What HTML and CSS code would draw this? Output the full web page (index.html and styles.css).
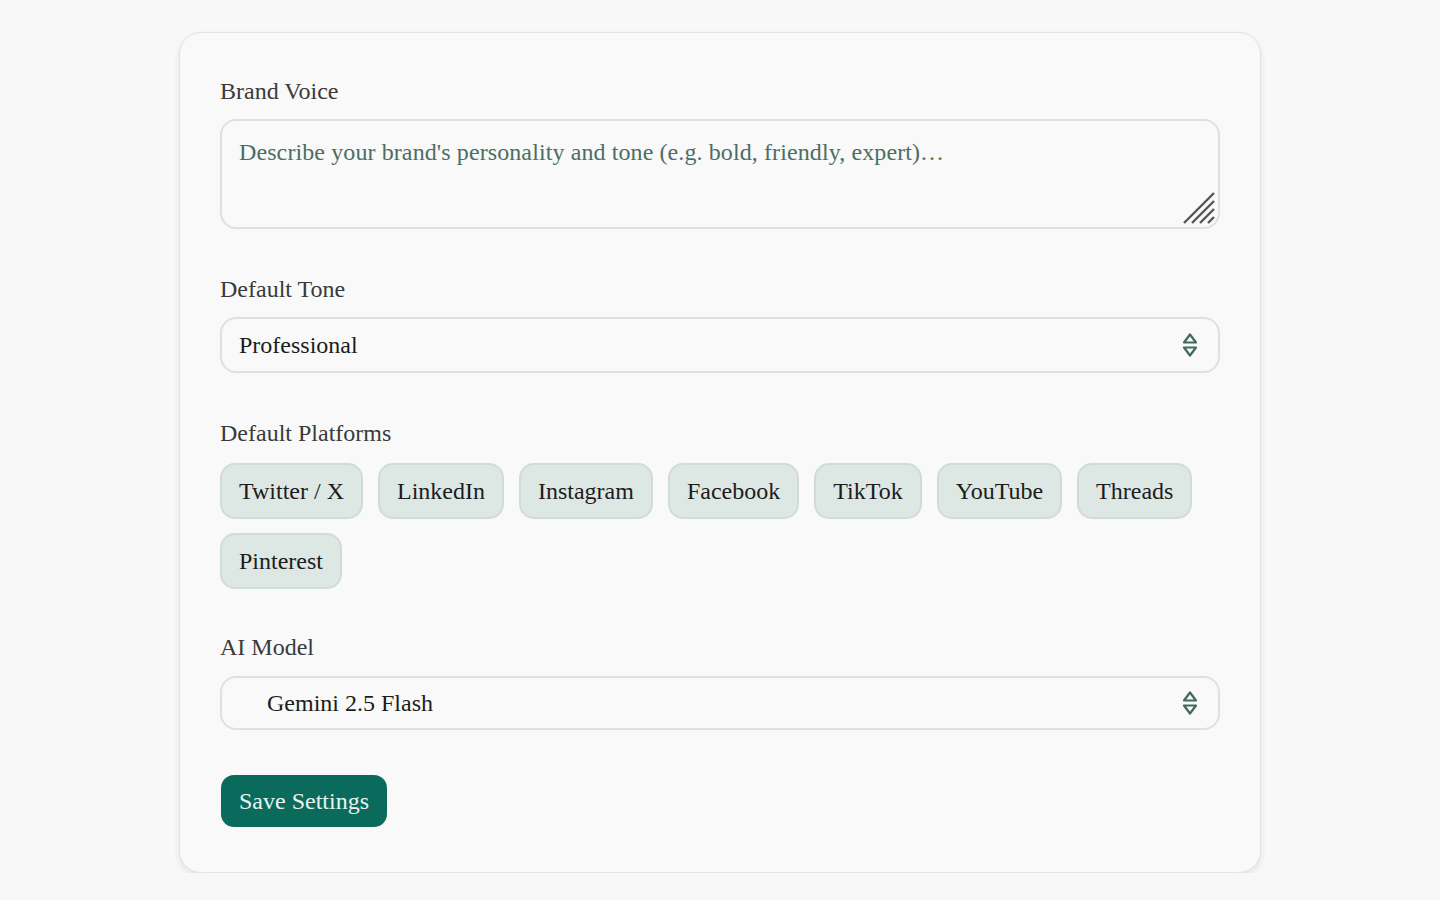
FILE: index.html
```
<!DOCTYPE html>
<html lang="en">
<head>
    <meta charset="UTF-8">
    <meta name="viewport" content="width=device-width, initial-scale=1.0">
    <title>Settings</title>
    <link rel="stylesheet" href="styles.css">
</head>
<body>

<div class="card">
    <div class="field">
        <label for="voice">Brand Voice</label>
        <div class="area-wrap">
            <textarea id="voice" placeholder="Describe your brand's personality and tone (e.g. bold, friendly, expert)…"></textarea>
            <svg class="grip" width="34" height="34" viewBox="0 0 34 34">
                <path d="M2 32 L32 2 M10 32 L32 10 M18 32 L32 18 M26 32 L32 26" stroke="#555" stroke-width="2.4" fill="none"/>
            </svg>
        </div>
    </div>

    <div class="field">
        <label for="tone">Default Tone</label>
        <div class="select-wrap">
            <select id="tone">
                <option>Professional</option>
                <option>Casual</option>
                <option>Friendly</option>
                <option>Witty</option>
            </select>
            <svg class="arrows" width="16" height="26" viewBox="0 0 16 26">
                <path d="M8 2.5 L14 10.5 H2 Z M2 15.5 H14 L8 23.5 Z" stroke="#3f6a5d" stroke-width="2.2" stroke-linejoin="round" fill="none"/>
            </svg>
        </div>
    </div>

    <div class="field">
        <label>Default Platforms</label>
        <div class="chips">
            <button type="button" class="chip">Twitter / X</button>
            <button type="button" class="chip">LinkedIn</button>
            <button type="button" class="chip">Instagram</button>
            <button type="button" class="chip">Facebook</button>
            <button type="button" class="chip">TikTok</button>
            <button type="button" class="chip">YouTube</button>
            <button type="button" class="chip">Threads</button>
            <button type="button" class="chip">Pinterest</button>
        </div>
    </div>

    <div class="field">
        <label for="model">AI Model</label>
        <div class="select-wrap model-wrap">
            <select id="model" class="model">
                <option>Gemini 2.5 Flash</option>
                <option>Gemini 2.5 Pro</option>
            </select>
            <svg class="arrows" width="16" height="26" viewBox="0 0 16 26">
                <path d="M8 2.5 L14 10.5 H2 Z M2 15.5 H14 L8 23.5 Z" stroke="#3f6a5d" stroke-width="2.2" stroke-linejoin="round" fill="none"/>
            </svg>
        </div>
    </div>

    <div>
        <button type="button" class="save-btn">Save Settings</button>
    </div>
</div>

</body>
</html>
```

FILE: styles.css
```
* {
    margin: 0;
    padding: 0;
    box-sizing: border-box;
}

body {
    font-family: 'Liberation Serif', 'Times New Roman', serif;
    background-color: #f7f8f7;
    color: #1c1c1c;
    padding-top: 32px;
}

.card {
    width: 1082px;
    margin-left: 179px;
    background-color: #f8f9f8;
    border: 1px solid #e1e4e2;
    border-radius: 22px;
    box-shadow: 0 3px 6px rgba(0, 0, 0, 0.09);
    padding: 43px 40px 45px 40px;
    display: flex;
    flex-direction: column;
    gap: 45px;
}

.field {
    display: flex;
    flex-direction: column;
    gap: 13px;
}

label {
    font-size: 24px;
    line-height: 30px;
    color: #3a3a3a;
}

.area-wrap, .select-wrap {
    position: relative;
}

textarea {
    display: block;
    width: 100%;
    height: 110px;
    font-family: inherit;
    font-size: 24px;
    line-height: 30px;
    letter-spacing: 0.1px;
    padding: 16px 17px;
    border: 2px solid #dce2df;
    border-radius: 16px;
    background-color: #f8f9f8;
    color: #1c1c1c;
    resize: none;
    outline: none;
}

textarea::placeholder {
    color: #4d6d64;
}

.grip {
    position: absolute;
    right: 4px;
    bottom: 4px;
    pointer-events: none;
}

select {
    display: block;
    width: 100%;
    height: 56px;
    font-family: inherit;
    font-size: 24px;
    color: #1c1c1c;
    padding: 0 17px;
    border: 2px solid #dce2df;
    border-radius: 16px;
    background-color: #f8f9f8;
    appearance: none;
    -webkit-appearance: none;
    outline: none;
}

.model-wrap {
    margin-top: 1px;
}

select.model {
    height: 54px;
    padding-left: 45px;
}

.arrows {
    position: absolute;
    right: 22px;
    top: 50%;
    margin-top: -13px;
    pointer-events: none;
}

.chips {
    display: flex;
    flex-wrap: wrap;
    gap: 14px 15px;
    margin-top: 2px;
    margin-bottom: -2px;
}

.chip {
    font-family: inherit;
    font-size: 24px;
    height: 56px;
    padding: 0 17px;
    color: #1c1c1c;
    background-color: #dde7e4;
    border: 2px solid #d1dcd8;
    border-radius: 15px;
    cursor: pointer;
}

.save-btn {
    font-family: inherit;
    font-size: 24px;
    height: 52px;
    margin-left: 1px;
    padding: 0 18px;
    color: #e9f4f0;
    background-color: #0a6b5d;
    border: none;
    border-radius: 13px;
    cursor: pointer;
}
```
